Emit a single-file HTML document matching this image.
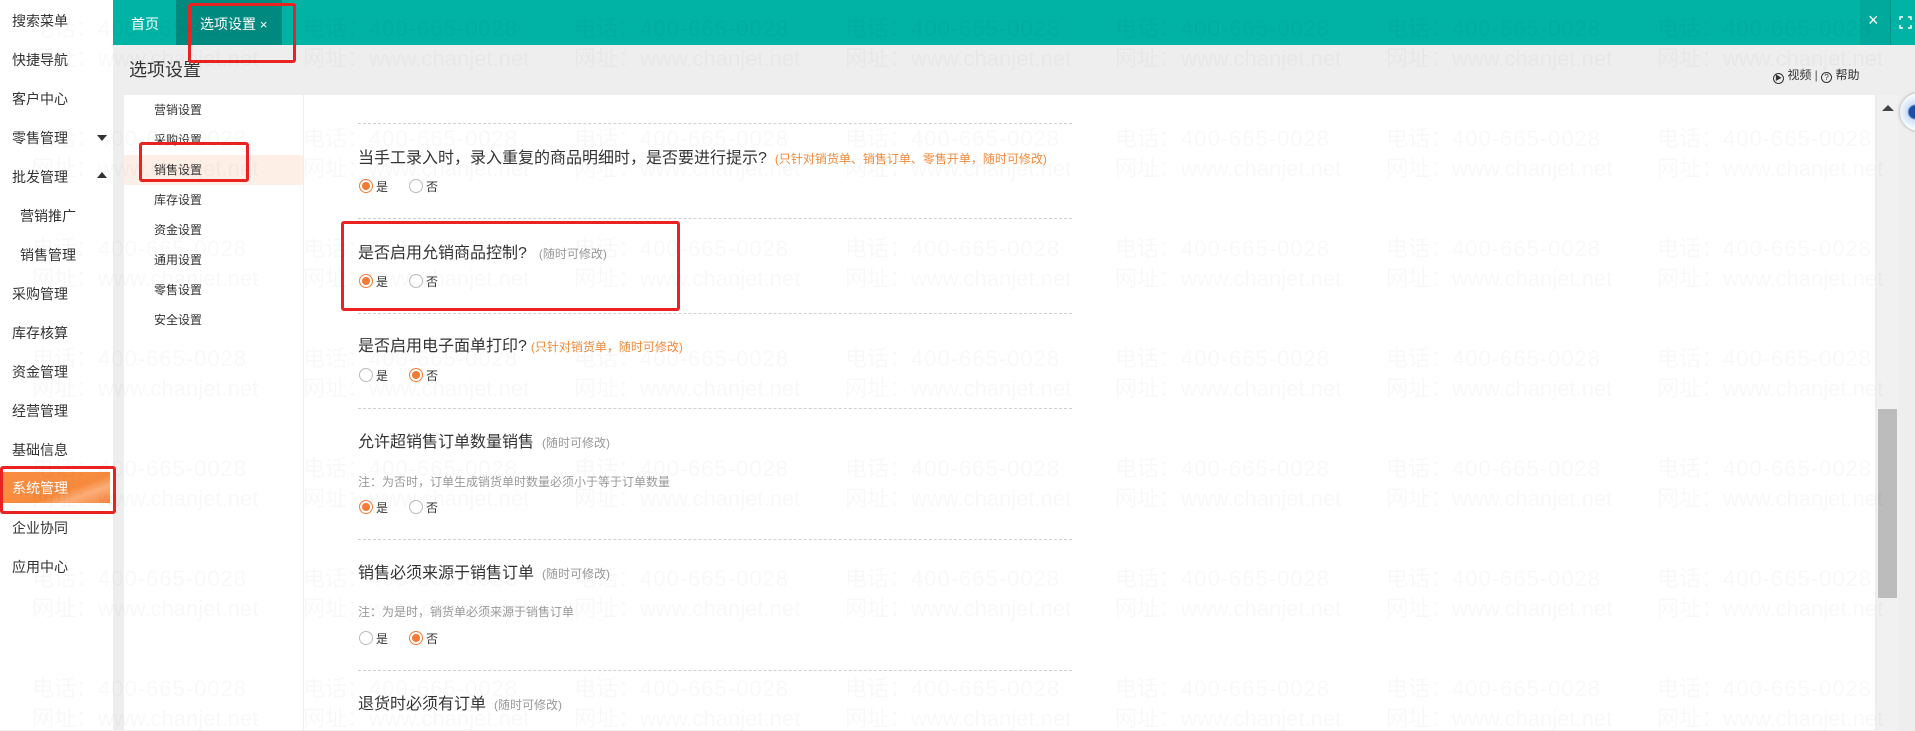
<!DOCTYPE html>
<html><head><meta charset="utf-8">
<style>
*{margin:0;padding:0;box-sizing:border-box}
body{width:1915px;height:730px;overflow:hidden;position:relative;background:#eeeeee;font-family:"Liberation Sans","Noto Sans CJK SC",sans-serif;color:#333}
.a{position:absolute;white-space:nowrap}
#side{left:0;top:0;width:113px;height:730px;background:#fff}
.si{position:absolute;left:12px;font-size:14px;line-height:16px;color:#333}
.arr{position:absolute;left:97px;width:0;height:0;border-left:5px solid transparent;border-right:5px solid transparent}
#top{left:113px;top:0;width:1802px;height:45px;background:#00b3a5}
.nav{position:absolute;left:154px;font-size:12px;line-height:14px;color:#333}
.dash{position:absolute;left:358px;width:714px;border-top:1px dashed #d0d0d0;height:0}
.q{position:absolute;left:358px;font-size:16px;line-height:18px;color:#333}
.q .o{font-size:12px;color:#f08a3c;margin-left:8px}
.q .g{font-size:12px;color:#999;margin-left:8px}
.note{position:absolute;left:358px;font-size:12px;line-height:14px;color:#999}
.r{position:absolute;width:14px;height:14px;border-radius:50%;border:1px solid #bbb;background:#fff}
.r.on{border-color:#f47a36}
.r.on::after{content:"";position:absolute;left:2px;top:2px;width:8px;height:8px;border-radius:50%;background:#f47a36}
.rl{position:absolute;font-size:12px;line-height:14px;color:#333}
.red{position:absolute;border:3px solid #ea2320;border-radius:3px}
.wm{position:absolute;font-size:22px;line-height:24px;color:rgba(0,0,0,0.028);white-space:nowrap;pointer-events:none}
</style></head><body>

<div class="a" id="side"></div>
<div class="si" style="top:13px">搜索菜单</div>
<div class="si" style="top:52px">快捷导航</div>
<div class="si" style="top:91px">客户中心</div>
<div class="si" style="top:130px">零售管理</div>
<div class="arr" style="top:135px;border-top:6px solid #333"></div>
<div class="si" style="top:169px">批发管理</div>
<div class="arr" style="top:172px;border-bottom:6px solid #333"></div>
<div class="si" style="top:208px;left:20px">营销推广</div>
<div class="si" style="top:247px;left:20px">销售管理</div>
<div class="si" style="top:286px">采购管理</div>
<div class="si" style="top:325px">库存核算</div>
<div class="si" style="top:364px">资金管理</div>
<div class="si" style="top:403px">经营管理</div>
<div class="si" style="top:442px">基础信息</div>
<div class="a" style="left:3px;top:472px;width:107px;height:31px;background:linear-gradient(160deg,#f98e43 0%,#f68a3c 60%,#fbae7a 75%,#f5823a 100%)"></div>
<div class="si" style="top:480px;color:#fff">系统管理</div>
<div class="si" style="top:520px">企业协同</div>
<div class="si" style="top:559px">应用中心</div>

<div class="a" id="top"></div>
<div class="a" style="left:176px;top:0;width:106px;height:45px;background:#00897e"></div>
<div class="a" style="left:131px;top:14px;font-size:14px;color:#fff">首页</div>
<div class="a" style="left:200px;top:14px;font-size:14px;color:#fff">选项设置 <span style="font-size:13px">×</span></div>
<div class="a" style="left:1860px;top:0;width:30px;height:45px;background:#00a99b"></div>
<div class="a" style="left:1890px;top:0;width:1px;height:45px;background:#00958a"></div>
<div class="a" style="left:1868px;top:10px;font-size:18px;color:#fff">×</div>
<svg class="a" style="left:1899px;top:16px" width="13" height="13" viewBox="0 0 13 13" fill="none" stroke="#fff" stroke-width="1.5"><path d="M1 4V1H4M9 1H12V4M12 9V12H9M4 12H1V9"/></svg>

<div class="a" style="left:129px;top:60px;font-size:18px;line-height:20px;color:#333">选项设置</div>
<div class="a" style="left:1773px;top:66px;font-size:12px;color:#333"><span style="display:inline-block;width:11px;height:11px;border:1px solid #333;border-radius:50%;font-size:7px;line-height:9px;text-align:center;vertical-align:-1px">▶</span> 视频 <span style="color:#555">|</span> <span style="display:inline-block;width:11px;height:11px;border:1px solid #333;border-radius:50%;font-size:8px;line-height:9px;text-align:center;vertical-align:-1px">?</span> 帮助</div>

<div class="a" style="left:124px;top:95px;width:1751px;height:635px;background:#fff"></div>
<div class="a" style="left:303px;top:95px;width:1px;height:635px;background:#eee"></div>
<div class="a" style="left:124px;top:155px;width:179px;height:30px;background:#fdeee6"></div>
<div class="nav" style="top:103px">营销设置</div>
<div class="nav" style="top:133px">采购设置</div>
<div class="nav" style="top:163px">销售设置</div>
<div class="nav" style="top:193px">库存设置</div>
<div class="nav" style="top:223px">资金设置</div>
<div class="nav" style="top:253px">通用设置</div>
<div class="nav" style="top:283px">零售设置</div>
<div class="nav" style="top:313px">安全设置</div>

<div class="dash" style="top:123px"></div>
<div class="q" style="top:150px">当手工录入时，录入重复的商品明细时，是否要进行提示?<span class="o">(只针对销货单、销售订单、零售开单，随时可修改)</span></div>
<div class="r on" style="left:359px;top:179px"></div><div class="rl" style="left:376px;top:180px">是</div>
<div class="r" style="left:409px;top:179px"></div><div class="rl" style="left:426px;top:180px">否</div>

<div class="dash" style="top:218px"></div>
<div class="q" style="top:245px">是否启用允销商品控制?<span class="g" style="margin-left:12px">(随时可修改)</span></div>
<div class="r on" style="left:359px;top:274px"></div><div class="rl" style="left:376px;top:275px">是</div>
<div class="r" style="left:409px;top:274px"></div><div class="rl" style="left:426px;top:275px">否</div>

<div class="dash" style="top:313px"></div>
<div class="q" style="top:338px">是否启用电子面单打印?<span class="o" style="margin-left:4px">(只针对销货单，随时可修改)</span></div>
<div class="r" style="left:359px;top:368px"></div><div class="rl" style="left:376px;top:369px">是</div>
<div class="r on" style="left:409px;top:368px"></div><div class="rl" style="left:426px;top:369px">否</div>

<div class="dash" style="top:408px"></div>
<div class="q" style="top:434px">允许超销售订单数量销售<span class="g">(随时可修改)</span></div>
<div class="note" style="top:475px">注：为否时，订单生成销货单时数量必须小于等于订单数量</div>
<div class="r on" style="left:359px;top:500px"></div><div class="rl" style="left:376px;top:501px">是</div>
<div class="r" style="left:409px;top:500px"></div><div class="rl" style="left:426px;top:501px">否</div>

<div class="dash" style="top:539px"></div>
<div class="q" style="top:565px">销售必须来源于销售订单<span class="g">(随时可修改)</span></div>
<div class="note" style="top:605px">注：为是时，销货单必须来源于销售订单</div>
<div class="r" style="left:359px;top:631px"></div><div class="rl" style="left:376px;top:632px">是</div>
<div class="r on" style="left:409px;top:631px"></div><div class="rl" style="left:426px;top:632px">否</div>

<div class="dash" style="top:670px"></div>
<div class="q" style="top:696px">退货时必须有订单<span class="g">(随时可修改)</span></div>

<div class="a" style="left:1877px;top:95px;width:21px;height:635px;background:#f1f1f1"></div>
<div class="a" style="left:1878px;top:409px;width:19px;height:189px;background:#bcbcbc"></div>
<div class="a" style="left:1882px;top:105px;width:0;height:0;border-left:6px solid transparent;border-right:6px solid transparent;border-bottom:6px solid #444"></div>
<div class="a" style="left:1898px;top:95px;width:17px;height:635px;background:#eee"></div>
<div class="a" style="left:1900px;top:93px;width:38px;height:38px;border-radius:50%;background:radial-gradient(circle at 40% 50%,#1a4fa8 0,#1a4fa8 6px,#cfe0f5 8px,#fff 18px);box-shadow:0 0 3px #999"></div>

<div class="red" style="left:188px;top:3px;width:108px;height:60px"></div>
<div class="red" style="left:139px;top:142px;width:110px;height:40px"></div>
<div class="red" style="left:341px;top:221px;width:339px;height:90px"></div>
<div class="red" style="left:0;top:466px;width:116px;height:48px"></div>

<div id="wm"></div>
<script>
var h='',cols=[32,303,574,845,1115,1386,1657],rows=[17,127,237,347,457,567,677];
rows.forEach(function(y){cols.forEach(function(x){
h+='<div class="wm" style="left:'+x+'px;top:'+y+'px">电话：<span style="letter-spacing:1px">400-665-0028</span></div>';
h+='<div class="wm" style="left:'+x+'px;top:'+(y+30)+'px">网址：www.chanjet.net</div>';
});});
document.getElementById('wm').innerHTML=h;
</script>
</body></html>
